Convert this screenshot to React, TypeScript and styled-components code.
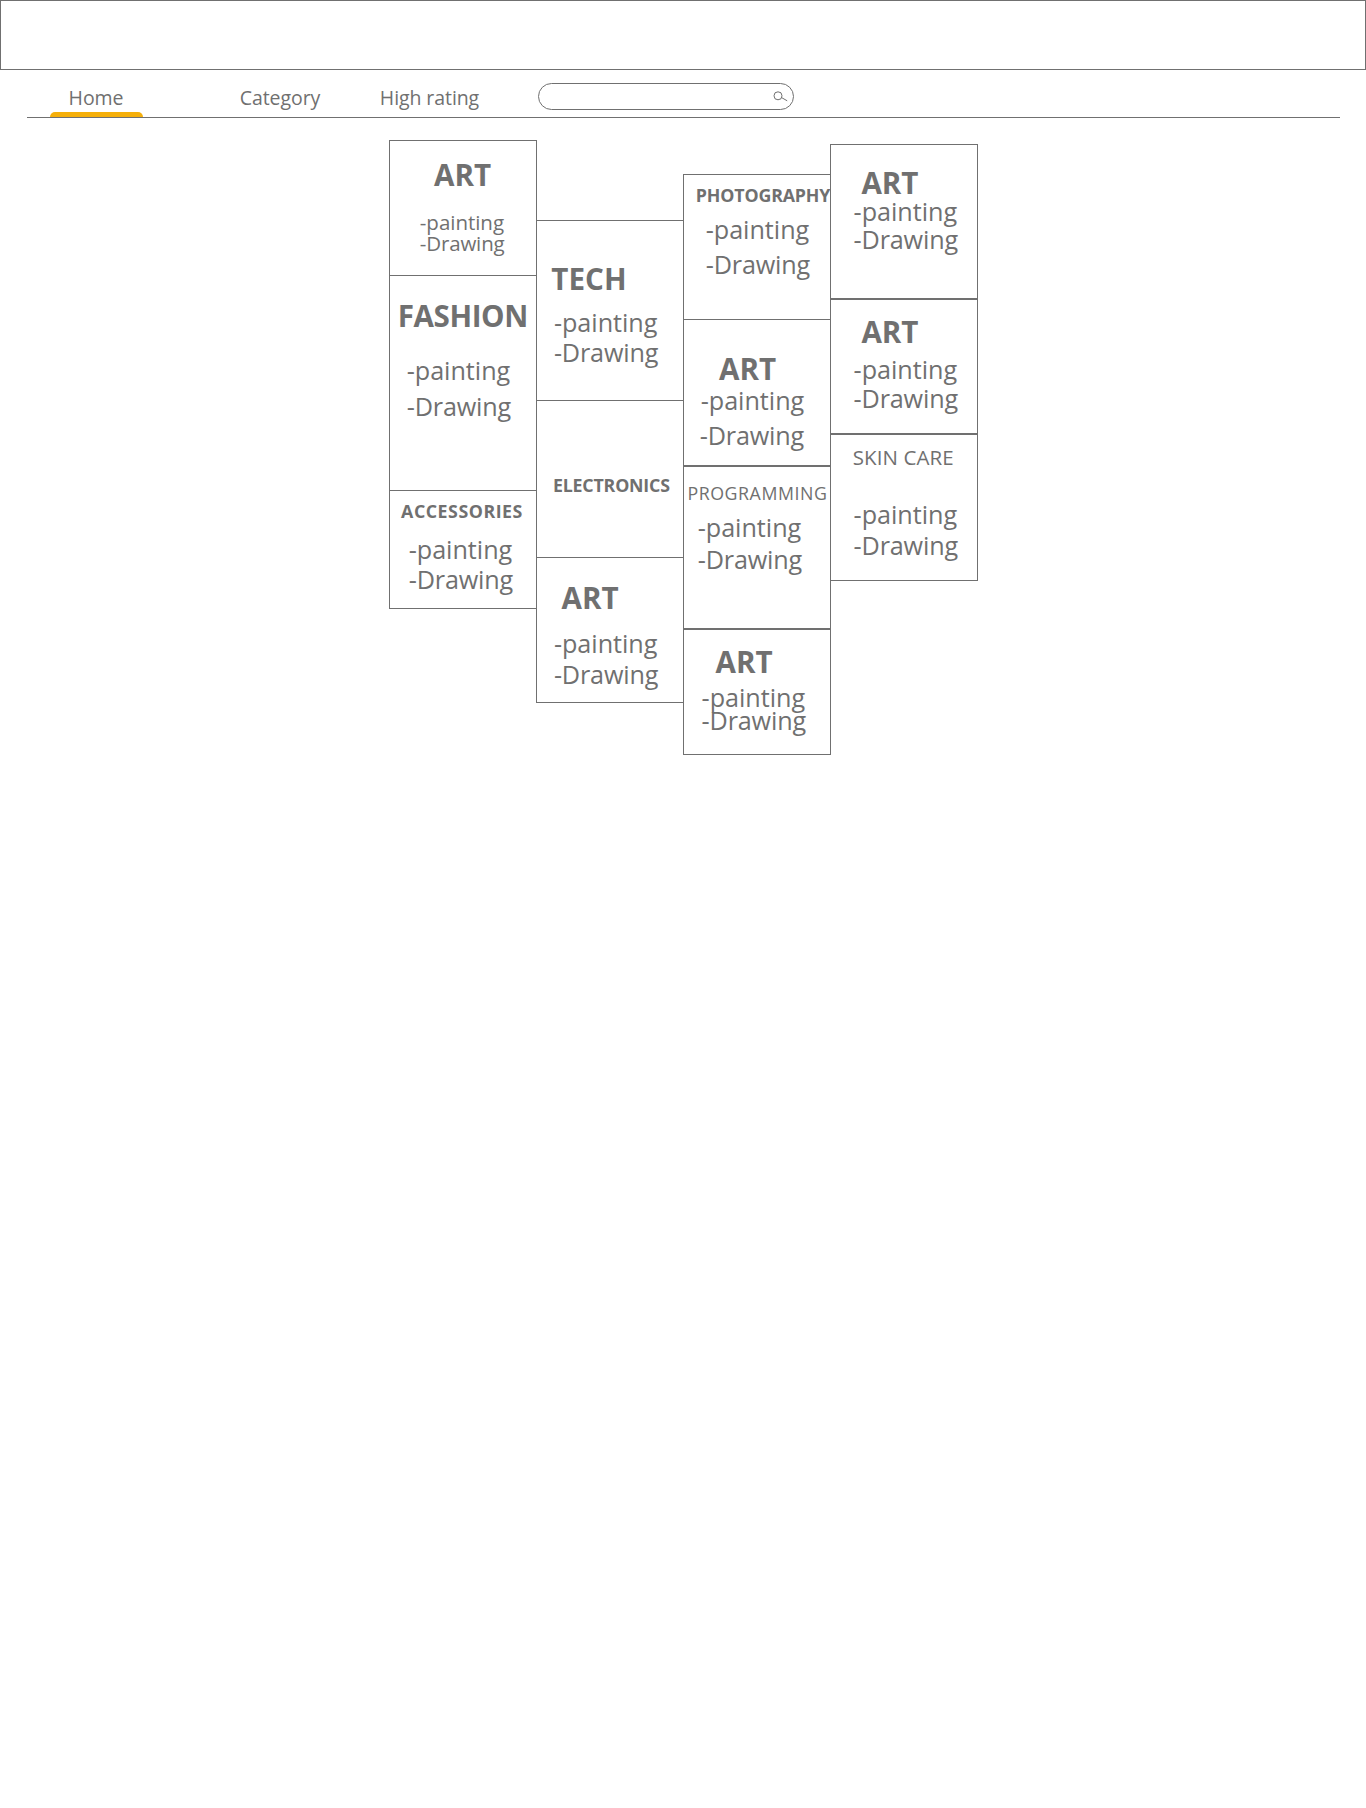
import React from 'react';
import styled, { createGlobalStyle } from 'styled-components';

const ink = '#707070';

const GlobalStyle = createGlobalStyle`
  *, *::before, *::after { box-sizing: border-box; }
  body {
    margin: 0;
    background: #fff;
    color: ${ink};
    font-family: "Open Sans", "Noto Sans", sans-serif;
  }
`;

const Page = styled.div`
  min-height: 1808px;
  overflow: hidden;
`;

const Banner = styled.header`
  height: 70px;
  border: 1px solid ${ink};
`;

const NavBar = styled.nav`
  display: flex;
  align-items: flex-start;
  height: 48px;
  margin: 0 26px 0 27px;
  border-bottom: 1px solid ${ink};
`;

const NavItem = styled.a<{ $before: number; $width: number; $active?: boolean }>`
  display: flex;
  flex-direction: column;
  justify-content: space-between;
  flex: none;
  width: ${p => p.$width}px;
  height: 47px;
  margin-left: ${p => p.$before}px;
  padding-top: 14px;
  font-size: 19.5px;
  line-height: 27px;
  letter-spacing: -0.08px;
  text-align: center;
  text-indent: -1px;
  white-space: nowrap;
  color: ${ink};

  &::after {
    content: '';
    width: 100%;
    height: 5px;
    border-radius: 5px 5px 0 0;
    background: ${p => (p.$active ? '#f5af0a' : 'transparent')};
  }
`;

const SearchBox = styled.label`
  display: flex;
  align-items: center;
  width: 256px;
  height: 27px;
  margin: 13px 0 0 52px;
  padding-right: 5px;
  border: 1px solid ${ink};
  border-radius: 14px;
`;

const SearchInput = styled.input`
  flex: 1;
  min-width: 0;
  height: 100%;
  padding: 0 0 0 14px;
  border: 0;
  outline: 0;
  background: transparent;
  color: inherit;
  font: inherit;
`;

const SearchIcon = styled.svg`
  flex: none;
  display: block;
  width: 15px;
  height: 11px;
  margin-top: -1px;
`;

const Board = styled.main`
  display: flex;
  align-items: flex-start;
  justify-content: center;
  padding-top: 22px;
`;

const Column = styled.section<{ $top: number }>`
  display: flex;
  flex-direction: column;
  width: 148px;
  margin-top: ${p => p.$top}px;

  & + & { margin-left: -1px; }
`;

const Card = styled.article<{ $height: number; $joined?: boolean }>`
  height: ${p => p.$height}px;
  margin-top: ${p => (p.$joined ? -1 : 0)}px;
  padding-top: 1px;
  border: 1px solid ${ink};
`;

/* The text of a line rests on its bottom edge. */
const Line = styled.div<{ $drop: number; $indent: number }>`
  display: flex;
  align-items: flex-end;
  height: ${p => p.$drop}px;
  padding-left: ${p => p.$indent}px;
  line-height: 0.776;
  white-space: nowrap;
`;

type TitleKind = 'large' | 'small' | 'plain' | 'narrow';
const titleSize = { large: 29.6, small: 17.8, plain: 20.5, narrow: 17.8 };
const titleWeight = { large: 700, small: 700, plain: 400, narrow: 400 };

const Title = styled(Line).attrs({ as: 'h2' })<{ $kind: TitleKind; $spacing: number }>`
  margin: 0;
  font-size: ${p => titleSize[p.$kind]}px;
  font-weight: ${p => titleWeight[p.$kind]};
  letter-spacing: ${p => p.$spacing}px;
`;

const Entry = styled(Line)<{ $compact?: boolean; $spacing: number }>`
  font-size: ${p => (p.$compact ? 20.5 : 25.2)}px;
  letter-spacing: ${p => p.$spacing}px;
`;

interface CardData {
  height: number;
  /* shares its top border with the card above */
  joined?: boolean;
  title: string;
  kind?: TitleKind;
  spacing?: number;
  /* indent, and distance down from the text above */
  at: [number, number];
  painting?: [number, number];
  drawing?: [number, number];
  compact?: boolean;
}

const columns: { top: number; cards: CardData[] }[] = [
  {
    top: 0,
    cards: [
      { height: 136, title: 'ART', at: [44.5, 45], painting: [30.3, 44], drawing: [30.3, 21], compact: true },
      { height: 216, joined: true, title: 'FASHION', spacing: -0.4, at: [8.2, 51], painting: [17.2, 53], drawing: [17.2, 36] },
      { height: 119, joined: true, title: 'ACCESSORIES', kind: 'small', spacing: 0.53, at: [11.6, 27], painting: [19.2, 41], drawing: [19.2, 30] },
    ],
  },
  {
    top: 80,
    cards: [
      { height: 181, title: 'TECH', spacing: 0.1, at: [14.7, 69], painting: [17.4, 42], drawing: [17.4, 30] },
      { height: 158, joined: true, title: 'ELECTRONICS', kind: 'small', spacing: -0.2, at: [16.5, 91] },
      { height: 146, joined: true, title: 'ART', at: [25, 51], painting: [17.4, 44], drawing: [17.4, 31] },
    ],
  },
  {
    top: 34,
    cards: [
      { height: 146, title: 'PHOTOGRAPHY', kind: 'small', spacing: -0.15, at: [12.3, 27], painting: [22.2, 37], drawing: [22.2, 35] },
      { height: 147, joined: true, title: 'ART', at: [35.6, 60], painting: [17.2, 30], drawing: [16.2, 35] },
      { height: 163, title: 'PROGRAMMING', kind: 'narrow', spacing: 0.54, at: [4, 33], painting: [14.2, 37], drawing: [14.2, 32] },
      { height: 126, title: 'ART', at: [32, 43], painting: [18.1, 34], drawing: [18.1, 23] },
    ],
  },
  {
    top: 4,
    cards: [
      { height: 155, title: 'ART', at: [30.9, 49], painting: [23.1, 27], drawing: [23.1, 28] },
      { height: 135, title: 'ART', at: [30.9, 43], painting: [23.1, 36], drawing: [23.1, 29] },
      { height: 147, title: 'SKIN CARE', kind: 'plain', spacing: 0.1, at: [22.2, 30], painting: [23.1, 59], drawing: [23.1, 31] },
    ],
  },
];

function CategoryCard({ card }: { card: CardData }) {
  return (
    <Card $height={card.height} $joined={card.joined}>
      <Title $kind={card.kind ?? 'large'} $spacing={card.spacing ?? 0} $indent={card.at[0]} $drop={card.at[1]}>
        {card.title}
      </Title>
      {card.painting && (
        <Entry $compact={card.compact} $spacing={-0.03} $indent={card.painting[0]} $drop={card.painting[1]}>
          -painting
        </Entry>
      )}
      {card.drawing && (
        <Entry $compact={card.compact} $spacing={-0.16} $indent={card.drawing[0]} $drop={card.drawing[1]}>
          -Drawing
        </Entry>
      )}
    </Card>
  );
}

export default function App() {
  return (
    <Page>
      <GlobalStyle />
      <Banner />
      <NavBar>
        <NavItem $before={23} $width={93} $active>Home</NavItem>
        <NavItem $before={91} $width={93}>Category</NavItem>
        <NavItem $before={47} $width={112}>High rating</NavItem>
        <SearchBox>
          <SearchInput type="text" aria-label="Search" />
          <SearchIcon viewBox="0 0 15 11" fill="none" stroke={ink}>
            <circle cx="5" cy="4.8" r="4" />
            <path d="M8.6 6.6 14.2 9.8" />
          </SearchIcon>
        </SearchBox>
      </NavBar>
      <Board>
        {columns.map((column, i) => (
          <Column key={i} $top={column.top}>
            {column.cards.map((card, j) => (
              <CategoryCard key={j} card={card} />
            ))}
          </Column>
        ))}
      </Board>
    </Page>
  );
}
